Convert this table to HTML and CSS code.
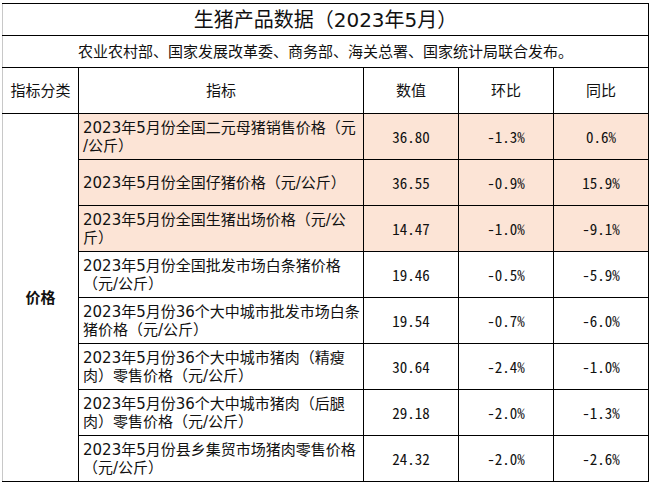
FILE: index.html
```html
<!DOCTYPE html>
<html lang="zh-CN">
<head>
<meta charset="utf-8">
<title>生猪产品数据（2023年5月）</title>
<link rel="stylesheet" href="styles.css">
</head>
<body>
<div class="sheet">
<table class="data">
  <colgroup>
    <col class="c-cat">
    <col class="c-name">
    <col class="c-num">
    <col class="c-num">
    <col class="c-num">
  </colgroup>
  <tr class="r-title"><td colspan="5" class="title">生猪产品数据（2023年5月）</td></tr>
  <tr class="r-sub"><td colspan="5" class="sub">农业农村部、国家发展改革委、商务部、海关总署、国家统计局联合发布。</td></tr>
  <tr class="r-head">
    <td class="head">指标分类</td>
    <td class="head">指标</td>
    <td class="head">数值</td>
    <td class="head">环比</td>
    <td class="head">同比</td>
  </tr>
  <tr class="r-data hl">
    <td rowspan="8" class="cat">价格</td>
    <td class="name"><span class="ln">2023年5月份全国二元母猪销售价格（元</span><span class="ln">/公斤）</span></td>
    <td class="num">36.80</td><td class="num">-1.3%</td><td class="num">0.6%</td>
  </tr>
  <tr class="r-data hl">
    <td class="name"><span class="ln">2023年5月份全国仔猪价格（元/公斤）</span></td>
    <td class="num">36.55</td><td class="num">-0.9%</td><td class="num">15.9%</td>
  </tr>
  <tr class="r-data hl">
    <td class="name"><span class="ln">2023年5月份全国生猪出场价格（元/公</span><span class="ln">斤）</span></td>
    <td class="num">14.47</td><td class="num">-1.0%</td><td class="num">-9.1%</td>
  </tr>
  <tr class="r-data">
    <td class="name"><span class="ln">2023年5月份全国批发市场白条猪价格</span><span class="ln">（元/公斤）</span></td>
    <td class="num">19.46</td><td class="num">-0.5%</td><td class="num">-5.9%</td>
  </tr>
  <tr class="r-data">
    <td class="name"><span class="ln">2023年5月份36个大中城市批发市场白条</span><span class="ln">猪价格（元/公斤）</span></td>
    <td class="num">19.54</td><td class="num">-0.7%</td><td class="num">-6.0%</td>
  </tr>
  <tr class="r-data">
    <td class="name"><span class="ln">2023年5月份36个大中城市猪肉（精瘦</span><span class="ln">肉）零售价格（元/公斤）</span></td>
    <td class="num">30.64</td><td class="num">-2.4%</td><td class="num">-1.0%</td>
  </tr>
  <tr class="r-data">
    <td class="name"><span class="ln">2023年5月份36个大中城市猪肉（后腿</span><span class="ln">肉）零售价格（元/公斤）</span></td>
    <td class="num">29.18</td><td class="num">-2.0%</td><td class="num">-1.3%</td>
  </tr>
  <tr class="r-data">
    <td class="name"><span class="ln">2023年5月份县乡集贸市场猪肉零售价格</span><span class="ln">（元/公斤）</span></td>
    <td class="num">24.32</td><td class="num">-2.0%</td><td class="num">-2.6%</td>
  </tr>
</table>
</div>
</body>
</html>
```
FILE: styles.css
```css
html, body {
  margin: 0;
  padding: 0;
  background: #ffffff;
}
body {
  font-family: "DejaVu Sans", "Noto Sans CJK SC", sans-serif;
  color: #111111;
}
.sheet {
  padding: 3px 0 0 2px;
}
.data {
  border-collapse: collapse;
  table-layout: fixed;
  width: 647px;
  border-left: 1px solid #c8c8c8;
}
.c-cat { width: 76px; }
.c-name { width: 285px; }
.c-num { width: 95px; }
.data td {
  border: 1px solid #000000;
  padding: 0;
  font-size: 15px;
  line-height: 18px;
  vertical-align: middle;
  overflow: hidden;
}
.data tr > td:first-child {
  border-left: 1px solid #c8c8c8;
}
.r-title td, .r-sub td {
  height: 31px;
  text-align: center;
}
.title {
  font-size: 20px !important;
  line-height: 24px !important;
}
.r-head td, .r-data td {
  height: 45px;
}
.head {
  text-align: center;
}
.cat {
  text-align: center;
  font-weight: bold;
  background: #ffffff;
}
.name {
  padding: 0 0 0 4px !important;
  text-align: left;
}
.ln {
  display: block;
  white-space: nowrap;
}
.num {
  text-align: center;
  font-family: "Noto Sans CJK SC", sans-serif;
  font-feature-settings: "hwid" 1;
}
.hl .name, .hl .num {
  background: #fce4d6;
}
```
